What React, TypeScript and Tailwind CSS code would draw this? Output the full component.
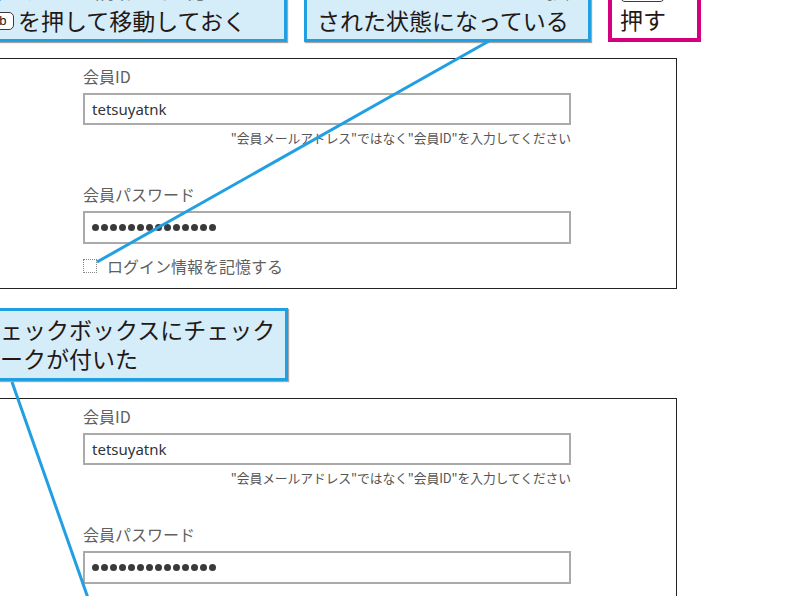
const jp = "font-['Noto_Sans_CJK_JP','Noto_Sans',sans-serif]";

function Keycap({ label, className }: { label: string; className?: string }) {
  return (
    <span
      className={`inline-flex items-center justify-center rounded-[5px] border-[1.5px] border-[#3a3a3a] bg-white text-[13px] leading-none text-[#231815] font-['Liberation_Sans',sans-serif] ${className ?? ''}`}
    >
      {label}
    </span>
  );
}

function LoginPanel({ checked }: { checked?: boolean }) {
  const dots = Array.from({ length: 14 });
  return (
    <div className="ml-[-1px] w-[678px] border border-[#222] bg-white pl-[83px] pt-[5px] pb-[10px]">
      <div className="w-[488px]">
        <div className="h-[24px] text-[16px] leading-[24px] text-[#606060]">会員ID</div>
        <div className="mt-[5px] flex h-[32px] items-center border-2 border-[#aaaaaa] pl-[7px] text-[15px] text-[#333] font-['Noto_Sans',sans-serif]">
          tetsuyatnk
        </div>
        <div className="mt-[3px] h-[20px] text-right text-[12.8px] leading-[20px] tracking-[-0.1px] text-[#555]">
          "会員メールアドレス"ではなく"会員ID"を入力してください
        </div>
        <div className="mt-[34px] h-[24px] text-[16px] leading-[24px] text-[#606060]">会員パスワード</div>
        <div className="mt-[5px] flex h-[33px] items-center gap-[2px] border-2 border-[#aaaaaa] pl-[7px]">
          {dots.map((_, i) => (
            <span key={i} className="h-[7px] w-[7px] rounded-full bg-[#3a3a3a]" />
          ))}
        </div>
        <div className="mt-[10px] flex h-[24px] items-center gap-[10px]">
          <span className="flex h-[14px] w-[14px] items-center justify-center border border-dotted border-[#888] text-[11px] text-[#333]">
            {checked ? '✓' : ''}
          </span>
          <span className="text-[16px] text-[#606060]">ログイン情報を記憶する</span>
        </div>
      </div>
    </div>
  );
}

export default function App() {
  return (
    <div className={`relative h-[596px] w-[811px] overflow-hidden bg-white ${jp}`}>
      {/* top callouts, cut off by the page top */}
      <div className="flex h-[42px] items-end gap-[17px]">
        <div className="ml-[-60px] w-[347px] shrink-0 border-[3px] border-[#209fe2] bg-[#d5ecf9] pl-[35px] pt-[4px] pb-[4px] text-[23px] leading-[29px] text-[#231815] shadow-[1px_1px_1px_rgba(0,0,0,0.35)]">
          <div className="mb-[3px] whitespace-nowrap">［ログイン情報を記憶する］まで</div>
          <div className="flex items-center whitespace-nowrap">
            <Keycap label="Tab" className="mr-[4px] h-[18px] w-[36px]" />
            を押して移動しておく
          </div>
        </div>
        <div className="w-[287px] shrink-0 border-[3px] border-[#209fe2] bg-[#d5ecf9] pl-[10px] pt-[4px] pb-[4px] text-[23px] leading-[29px] text-[#231815] shadow-[1px_1px_1px_rgba(0,0,0,0.35)]">
          <div className="mb-[3px] whitespace-nowrap">チェックボックスが選択</div>
          <div className="whitespace-nowrap">された状態になっている</div>
        </div>
        <div className="w-[93px] shrink-0 border-4 border-[#d5007f] bg-white pl-[8px] pt-[4px] pb-[4px] text-[23px] leading-[29px] text-[#231815]">
          <div className="flex items-end pb-[3px]">
            <Keycap label="space" className="h-[22px] w-[45px]" />
          </div>
          <div className="whitespace-nowrap">押す</div>
        </div>
      </div>

      <div className="mt-[16px]">
        <LoginPanel />
      </div>

      <div className="mt-[19px] ml-[-40px] w-[328px] border-[3px] border-[#209fe2] bg-[#d5ecf9] pl-[14px] pt-[4px] pb-[5px] text-[23px] leading-[29px] text-[#231815] shadow-[1px_1px_1px_rgba(0,0,0,0.35)]">
        <div className="whitespace-nowrap">チェックボックスにチェック</div>
        <div className="whitespace-nowrap">マークが付いた</div>
      </div>

      <div className="mt-[17px]">
        <LoginPanel checked />
      </div>

      <svg className="pointer-events-none absolute inset-0" width="811" height="596" viewBox="0 0 811 596">
        <line x1="489" y1="41" x2="97" y2="262" stroke="#209fe2" strokeWidth="3" />
        <line x1="12" y1="382" x2="88" y2="598" stroke="#209fe2" strokeWidth="3" />
      </svg>
    </div>
  );
}
